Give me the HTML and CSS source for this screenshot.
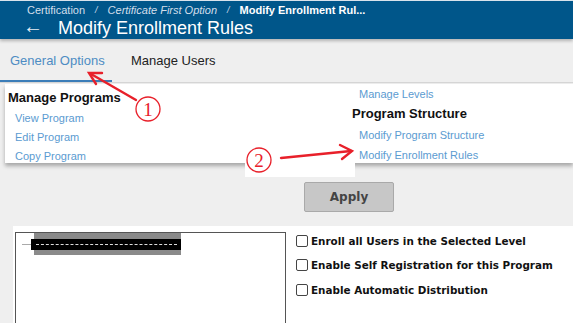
FILE: index.html
```html
<!DOCTYPE html>
<html>
<head>
<meta charset="utf-8">
<link rel="stylesheet" href="styles.css">
</head>
<body>
<div class="page">
  <header class="header">
    <div class="crumbs">
      <span class="crumb">Certification</span>
      <span class="sep">/</span>
      <span class="crumb italic">Certificate First Option</span>
      <span class="sep">/</span>
      <span class="crumb current">Modify Enrollment Rul...</span>
    </div>
    <div class="title-row">
      <span class="back">&#8592;</span>
      <h1 class="title">Modify Enrollment Rules</h1>
    </div>
  </header>

  <nav class="tabs">
    <span class="tab active">General Options</span>
    <span class="tab">Manage Users</span>
  </nav>

  <div class="menu">
    <div class="menu-col left">
      <div class="menu-head">Manage Programs</div>
      <a class="menu-link">View Program</a>
      <a class="menu-link">Edit Program</a>
      <a class="menu-link">Copy Program</a>
    </div>
    <div class="menu-col right">
      <a class="menu-link first">Manage Levels</a>
      <div class="menu-head">Program Structure</div>
      <a class="menu-link">Modify Program Structure</a>
      <a class="menu-link">Modify Enrollment Rules</a>
    </div>
  </div>

  <div class="actions">
    <button class="apply">Apply</button>
  </div>

  <div class="content">
    <div class="tree">
      <div class="tree-item">
        <span class="tree-line"></span>
        <span class="tree-node"><span class="redact"><span class="dash"></span></span></span>
      </div>
    </div>
    <div class="options">
      <label class="opt"><span class="box"></span>Enroll all Users in the Selected Level</label>
      <label class="opt"><span class="box"></span>Enable Self Registration for this Program</label>
      <label class="opt"><span class="box"></span>Enable Automatic Distribution</label>
    </div>
  </div>

  <div class="note-patch"></div>
  <svg class="annot" width="573" height="323" viewBox="0 0 573 323">
    <g stroke="#e8202a" fill="none" stroke-width="2.4" stroke-linecap="round">
      <line x1="136" y1="100" x2="91" y2="74"/>
      <polyline points="102,73 89,73 96,84"/>
      <line x1="281" y1="158" x2="351" y2="151"/>
      <polyline points="340,145 352,151 342,159"/>
    </g>
    <g fill="none" stroke="#e8202a" stroke-width="1.3">
      <circle cx="148" cy="109" r="12"/>
      <circle cx="259" cy="160" r="12"/>
    </g>
    <g fill="#e8202a" font-family="'Liberation Serif', serif" font-size="19" text-anchor="middle">
      <text x="148" y="116">1</text>
      <text x="259" y="167">2</text>
    </g>
  </svg>
</div>
</body>
</html>
```
FILE: styles.css
```css
* { box-sizing: border-box; }
html, body { margin: 0; padding: 0; }
body {
  background: #efefef;
  font-family: "Liberation Sans", Arial, sans-serif;
  width: 573px;
  height: 323px;
  overflow: hidden;
}
.page { position: relative; width: 573px; height: 323px; overflow: hidden; }

.header {
  background: #00568a;
  height: 39px;
  border-top: 1px solid #d9e3ec;
  padding-left: 27px;
  box-shadow: 0 2px 3px rgba(0,0,0,0.25);
  color: #fff;
}
.crumbs {
  display: flex;
  align-items: center;
  height: 16px;
  font-size: 11px;
  color: #d3dfea;
  padding-top: 1px;
}
.crumb.italic { font-style: italic; }
.crumb.current { font-weight: bold; color: #fff; }
.sep { font-style: italic; font-size: 9px; margin: 0 10px; }
.title-row {
  display: flex;
  align-items: center;
  height: 22px;
}
.back { font-size: 20px; margin-left: -4px; width: 35px; line-height: 20px; color: #e8eef4; margin-top: -5px; }
.title { margin: 0; font-size: 18px; font-weight: normal; line-height: 22px; }

.tabs {
  display: flex;
  height: 44px;
  border-bottom: 1px solid #d6d6d6;
  font-size: 13px;
}
.tab {
  color: #222;
  padding: 14px 0 0;
  margin-left: 19px;
}
.tab.active {
  color: #4d8cc3;
  margin-left: 0;
  padding-left: 10px;
  width: 112px;
  border-bottom: 2px solid #3b7db8;
}

.menu {
  margin-left: 5px;
  margin-top: 1px;
  height: 79px;
  background: #fff;
  display: flex;
  box-shadow: 0 3px 4px rgba(0,0,0,0.3);
}
.menu-col { display: flex; flex-direction: column; }
.menu-col.left { width: 347px; padding-left: 3px; padding-top: 6px; }
.menu-col.right { padding-top: 2px; }
.menu-head { font-size: 13px; font-weight: bold; color: #111; line-height: 16px; }
.menu-link {
  font-size: 11px;
  color: #5b9bd1;
  line-height: 19px;
  padding-left: 7px;
}
.left .menu-head { margin-bottom: 3px; }
.right .menu-head { margin-top: 4px; margin-bottom: 3px; }
.right .menu-link { line-height: 20px; }
.right .menu-link.first { line-height: 16px; }

.actions {
  height: 63px;
  padding-left: 304px;
  padding-top: 19px;
}
.apply {
  width: 90px;
  height: 30px;
  background: #c7c7c7;
  border: 1px solid #a9a9a9;
  border-radius: 2px;
  font-family: "DejaVu Sans", Verdana, sans-serif;
  font-weight: bold;
  font-size: 12px;
  color: #444;
  padding: 0;
}

.content {
  margin-left: 13px;
  background: #fff;
  height: 100px;
  display: flex;
  padding-top: 6px;
  padding-left: 2px;
}
.tree {
  width: 271px;
  border: 1.5px solid #555;
  border-bottom: none;
}
.tree-item { display: flex; align-items: center; height: 22px; }
.tree-line { width: 10px; height: 1px; background: #aaa; margin-left: 6px; }
.tree-node {
  width: 147px;
  height: 22px;
  margin-left: 2px;
  background: #8a8a8a;
  display: flex;
  align-items: center;
}
.redact {
  display: flex;
  align-items: center;
  width: 151px;
  height: 11px;
  margin-left: -3px;
  background: #000;
}
.dash {
  width: 141px;
  margin-left: 5px;
  border-top: 1px dashed #ddd;
}

.options {
  display: flex;
  flex-direction: column;
  padding-left: 10px;
  margin-top: -3px;
}
.opt {
  display: flex;
  align-items: center;
  height: 24.3px;
  font-family: "DejaVu Sans", Verdana, sans-serif;
  font-weight: bold;
  font-size: 10.4px;
  color: #111;
}
.box {
  width: 12px;
  height: 12px;
  border: 1px solid #444;
  border-radius: 2px;
  margin-right: 3px;
  background: #fff;
}

.note-patch {
  position: absolute;
  left: 245px;
  top: 140px;
  width: 110px;
  height: 37px;
  background: #fff;
}
.annot { position: absolute; left: 0; top: 0; }
```
